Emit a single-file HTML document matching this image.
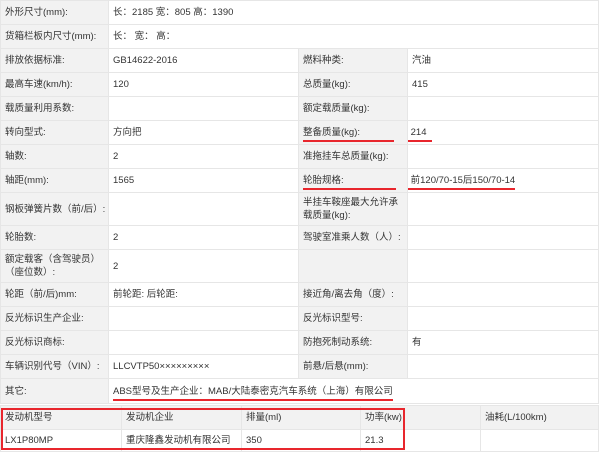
<!DOCTYPE html><html><head><meta charset="utf-8"><style>
body{margin:0;width:600px;height:453px;background:#fff;font-family:"Liberation Sans","Noto Sans CJK SC",sans-serif;font-size:9.5px;color:#333;position:relative;overflow:hidden}
table{border-collapse:collapse;table-layout:fixed;position:absolute;left:0}
td{border:1px solid #e6e6e6;padding:0 0 0 4px;vertical-align:middle;line-height:13px;overflow:hidden;white-space:nowrap}
td.l{background:#f2f2f2}
td.w{white-space:normal}
.u{border-bottom:2px solid #e8262d;padding-bottom:2px}
.box{position:absolute;left:1px;top:408px;width:400px;height:38px;border:2px solid #e8262d}
</style></head><body>
<table style="top:0;width:598px">
<col style="width:108px"><col style="width:190px"><col style="width:109px"><col style="width:191px">
<tr style="height:24px"><td class="l">外形尺寸(mm):</td><td colspan="3">长：2185 宽：805 高：1390</td></tr>
<tr style="height:24px"><td class="l">货箱栏板内尺寸(mm):</td><td colspan="3">长： 宽： 高：</td></tr>
<tr style="height:24px"><td class="l">排放依据标准:</td><td>GB14622-2016</td><td class="l">燃料种类:</td><td>汽油</td></tr>
<tr style="height:24px"><td class="l">最高车速(km/h):</td><td>120</td><td class="l">总质量(kg):</td><td>415</td></tr>
<tr style="height:24px"><td class="l">载质量利用系数:</td><td></td><td class="l">额定载质量(kg):</td><td></td></tr>
<tr style="height:24px"><td class="l">转向型式:</td><td>方向把</td><td class="l"><span class="u">整备质量(kg):&nbsp;&nbsp;&nbsp;&nbsp;&nbsp;&nbsp;&nbsp;&nbsp;&nbsp;&nbsp;&nbsp;&nbsp;&nbsp;</span></td><td style="padding-left:0"><span class="u">&nbsp;214&nbsp;&nbsp;</span></td></tr>
<tr style="height:24px"><td class="l">轴数:</td><td>2</td><td class="l">准拖挂车总质量(kg):</td><td></td></tr>
<tr style="height:24px"><td class="l">轴距(mm):</td><td>1565</td><td class="l"><span class="u">轮胎规格:&nbsp;&nbsp;&nbsp;&nbsp;&nbsp;&nbsp;&nbsp;&nbsp;&nbsp;&nbsp;&nbsp;&nbsp;&nbsp;&nbsp;&nbsp;&nbsp;&nbsp;&nbsp;&nbsp;&nbsp;</span></td><td style="padding-left:0"><span class="u">&nbsp;前120/70-15后150/70-14</span></td></tr>
<tr style="height:33px"><td class="l">钢板弹簧片数（前/后）:</td><td></td><td class="l w">半挂车鞍座最大允许承载质量(kg):</td><td></td></tr>
<tr style="height:24px"><td class="l">轮胎数:</td><td>2</td><td class="l">驾驶室准乘人数（人）:</td><td></td></tr>
<tr style="height:33px"><td class="l w">额定载客（含驾驶员）（座位数）:</td><td>2</td><td class="l"></td><td></td></tr>
<tr style="height:24px"><td class="l">轮距（前/后)mm:</td><td>前轮距: 后轮距:</td><td class="l">接近角/离去角（度）:</td><td></td></tr>
<tr style="height:24px"><td class="l">反光标识生产企业:</td><td></td><td class="l">反光标识型号:</td><td></td></tr>
<tr style="height:24px"><td class="l">反光标识商标:</td><td></td><td class="l">防抱死制动系统:</td><td>有</td></tr>
<tr style="height:24px"><td class="l">车辆识别代号（VIN）:</td><td>LLCVTP50×××××××××</td><td class="l">前悬/后悬(mm):</td><td></td></tr>
<tr style="height:25px"><td class="l">其它:</td><td colspan="3"><span class="u">ABS型号及生产企业：MAB/大陆泰密克汽车系统（上海）有限公司</span></td></tr>
</table>
<table style="top:405px;width:598px">
<col style="width:121px"><col style="width:120px"><col style="width:119px"><col style="width:120px"><col style="width:118px">
<tr style="height:24px;background:#f2f2f2"><td>发动机型号</td><td>发动机企业</td><td>排量(ml)</td><td>功率(kw)</td><td>油耗(L/100km)</td></tr>
<tr style="height:22px"><td>LX1P80MP</td><td>重庆隆鑫发动机有限公司</td><td>350</td><td>21.3</td><td></td></tr>
</table>
<div class="box"></div>
</body></html>
